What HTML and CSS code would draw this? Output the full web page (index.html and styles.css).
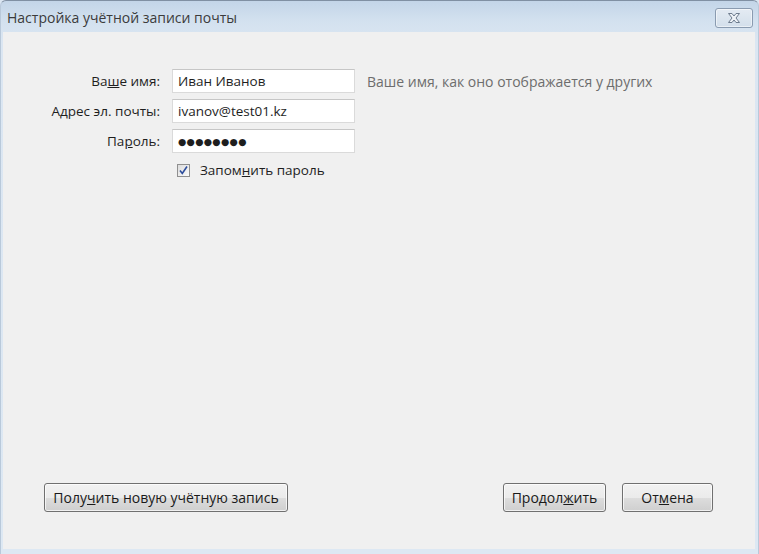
FILE: index.html
```html
<!DOCTYPE html>
<html lang="ru">
<head>
<meta charset="utf-8">
<title>Настройка учётной записи почты</title>
<link rel="stylesheet" href="styles.css">
</head>
<body>
<div class="window">
  <div class="titlebar">
    <div class="title">Настройка учётной записи почты</div>
    <div class="close">
      <svg width="16" height="12" viewBox="0 0 16 12">
        <path d="M2.5 1.5 H6 L8 4 L10 1.5 H13.5 L10 6 L13.5 10.5 H10 L8 8 L6 10.5 H2.5 L6 6 Z" fill="#eef2f7" stroke="#6e7c8e" stroke-width="1" stroke-linejoin="round"/>
      </svg>
    </div>
  </div>
  <div class="client">
    <div class="form">
      <label class="label">Ва<u>ш</u>е имя:</label>
      <div class="field">Иван Иванов</div>
      <div class="hint">Ваше имя, как оно отображается у других</div>

      <label class="label">А<u>д</u>рес эл. почты:</label>
      <div class="field">ivanov@test01.kz</div>
      <div></div>

      <label class="label">Па<u>р</u>оль:</label>
      <div class="field dots">●●●●●●●●</div>
      <div></div>

      <div></div>
      <div class="check-row">
        <span class="checkbox">
          <svg width="11" height="11" viewBox="0 0 11 11"><path d="M2 5.5 L4.3 8.5 L9 1.5" fill="none" stroke="#2d4d9c" stroke-width="1.6"/></svg>
        </span>
        <span>Запом<u>н</u>ить пароль</span>
      </div>
      <div></div>
    </div>
    <div class="spacer"></div>
    <div class="footer">
      <button class="btn btn-wide">Полу<u>ч</u>ить новую учётную запись</button>
      <div class="footer-right">
        <button class="btn btn-next">Продол<u>ж</u>ить</button>
        <button class="btn btn-cancel">От<u>м</u>ена</button>
      </div>
    </div>
  </div>
  <div class="bottom-frame"></div>
</div>
</body>
</html>
```
FILE: styles.css
```css
* { box-sizing: border-box; }
html, body { margin: 0; padding: 0; }
body {
  width: 759px;
  height: 554px;
  overflow: hidden;
  background: #dbe6f2;
  font-family: "Open Sans", "Noto Sans", sans-serif;
  font-size: 13.5px;
  color: #1e1e1e;
}
.window {
  width: 759px;
  height: 554px;
  display: flex;
  flex-direction: column;
  background: linear-gradient(#c3d5e8 0, #d3e1ef 20px, #dbe6f2 40px, #dde8f3 100%);
  border-top: 1px solid #8090a3;
  border-radius: 6px 6px 0 0;
  border-left: 1px solid #b9c9da;
  border-right: 1px solid #b9c9da;
}
.titlebar {
  height: 31px;
  display: flex;
  align-items: center;
  justify-content: space-between;
  padding: 0 5px 0 6px;
}
.title {
  font-size: 14px;
  color: #3b3b3b;
  margin-top: 2px;
}
.close {
  width: 38px;
  height: 20px;
  margin-top: 3px;
  border: 1px solid #8a9bb0;
  border-radius: 3px;
  background: linear-gradient(#e4ebf3, #d3dfeb);
  display: flex;
  align-items: center;
  justify-content: center;
  box-shadow: inset 0 0 0 1px rgba(255,255,255,0.5);
}
.client {
  flex: 1;
  background: #f0f0f0;
  margin: 0 3px 0 2px;
  display: flex;
  flex-direction: column;
}
.form {
  display: grid;
  grid-template-columns: 157px 183px 1fr;
  grid-auto-rows: auto;
  column-gap: 12px;
  row-gap: 6px;
  margin-top: 37px;
  align-items: center;
}
.label {
  text-align: right;
  white-space: nowrap;
}
.field {
  height: 24px;
  background: #fff;
  border: 1px solid #dadada;
  border-top-color: #c6c6c6;
  padding: 0 5px;
  display: flex;
  align-items: center;
  white-space: nowrap;
}
.dots {
  font-size: 9.5px;
  letter-spacing: 0.3px;
  font-family: "DejaVu Sans", sans-serif;
}
.hint {
  color: #6d6d6d;
  white-space: nowrap;
  font-size: 14px;
}
.check-row {
  display: flex;
  align-items: center;
  gap: 10px;
  padding-left: 5px;
  margin-top: 2px;
}
.checkbox {
  width: 13px;
  height: 13px;
  border: 1px solid #8f8f8f;
  background: linear-gradient(135deg, #dcdcdc, #fbfbfb);
  display: flex;
  align-items: center;
  justify-content: center;
}
.spacer { flex: 1; }
.footer {
  display: flex;
  justify-content: space-between;
  padding: 0 42px 37px 41px;
}
.footer-right {
  display: flex;
  gap: 16px;
}
.btn {
  height: 29px;
  font-family: inherit;
  font-size: 14px;
  color: #1a1a1a;
  border: 1px solid #707070;
  border-radius: 3px;
  background: linear-gradient(#f2f2f2 0%, #ebebeb 50%, #dddddd 51%, #cfcfcf 100%);
  box-shadow: inset 0 0 0 1px rgba(255,255,255,0.7);
  padding: 0;
}
.btn-wide { width: 244px; }
.btn-next { width: 103px; }
.btn-cancel { width: 91px; }
.bottom-frame { height: 5px; }
```
